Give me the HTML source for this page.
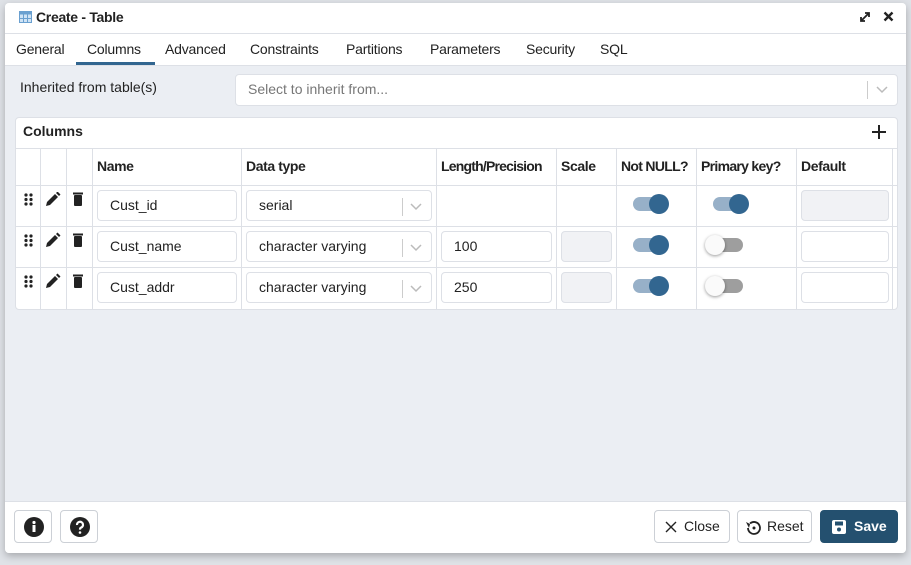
<!DOCTYPE html>
<html><head><style>
*{box-sizing:border-box;margin:0;padding:0}
body{width:911px;height:565px;background:#dfe2e7;font-family:"Liberation Sans",sans-serif;font-size:14px;color:#222;position:relative;overflow:hidden}
.a{position:absolute}
.dlg{left:5px;top:3px;width:901px;height:550px;background:#ebeef3;border-radius:4px;box-shadow:0 3px 8px rgba(0,0,0,.25);overflow:hidden}
.inp{position:absolute;background:#fff;border:1px solid #dde0e6;border-radius:4px;font-size:14px;padding-left:12px;line-height:29px;color:#222}
.dis{background:#f1f2f5}
.vl{position:absolute;top:0;width:1px;background:#dde0e6}
.hl{position:absolute;left:0;height:1px;background:#dde0e6}
.th{position:absolute;top:158px;font-weight:bold;font-size:14px;letter-spacing:-0.4px}
.tg{position:absolute;width:36px;height:16px}
.tg .tr{position:absolute;left:0;top:3px;width:34px;height:14px;border-radius:7px}
.tg .kn{position:absolute;top:0;width:20px;height:20px;border-radius:50%}
.on .tr{background:#97b0c8}.on .kn{left:16px;background:#326690}
.off .tr{background:#9e9e9e;left:4px}.off .kn{left:0;background:#fafafa;box-shadow:0 1px 3px rgba(0,0,0,.4)}
.btn{position:absolute;top:510px;height:33px;border:1px solid #ccd0d6;border-radius:4px;background:#fff;font-size:14px;line-height:31px}
</style></head><body>
<div class="a dlg"></div>
<div class="a" style="left:5px;top:3px;width:901px;height:62px;background:#fff;border-radius:4px 4px 0 0"></div>
<div class="a" style="left:5px;top:33px;width:901px;height:1px;background:#dde0e6"></div>
<div class="a" style="left:5px;top:65px;width:901px;height:1px;background:#dde0e6"></div>
<svg class="a" style="left:19px;top:11px" width="13" height="12"><rect x="0.5" y="0.5" width="12" height="11" fill="#cfe3f5" stroke="#6aa0d0"/><rect x="0.5" y="0.5" width="12" height="3" fill="#6aa0d0"/><line x1="4.5" y1="0" x2="4.5" y2="12" stroke="#6aa0d0"/><line x1="8.5" y1="0" x2="8.5" y2="12" stroke="#6aa0d0"/><line x1="0" y1="7.5" x2="13" y2="7.5" stroke="#6aa0d0"/></svg>
<div class="a" style="left:36px;top:9px;font-weight:bold;font-size:14px;letter-spacing:-0.3px">Create - Table</div>
<svg class="a" style="left:859px;top:11px" width="12" height="12"><path d="M2 10L10 2M6 2h4v4M2 6v4h4" stroke="#222" stroke-width="1.8" fill="none"/></svg>
<svg class="a" style="left:883px;top:11px" width="11" height="11"><path d="M1.5 1.5L9.5 9.5M9.5 1.5L1.5 9.5" stroke="#222" stroke-width="2.4"/></svg>
<div class="a" style="top:41px;left:16px;font-size:14px;letter-spacing:-0.2px">
<span class="a" style="left:0">General</span><span class="a" style="left:71px">Columns</span><span class="a" style="left:149px">Advanced</span><span class="a" style="left:234px">Constraints</span><span class="a" style="left:330px">Partitions</span><span class="a" style="left:414px">Parameters</span><span class="a" style="left:510px">Security</span><span class="a" style="left:584px">SQL</span></div>
<div class="a" style="left:76px;top:62px;width:79px;height:3px;background:#326690"></div>
<div class="a" style="left:20px;top:79px">Inherited from table(s)</div>
<div class="inp" style="left:235px;top:74px;width:663px;height:32px;color:#777">Select to inherit from...</div>
<div class="a" style="left:867px;top:81px;width:1px;height:18px;background:#ccc"></div>
<svg class="a" style="left:876px;top:86px" width="12" height="8"><path d="M1 1l5 5 5-5" stroke="#bbb" stroke-width="1.5" fill="none"/></svg>
<div class="a" style="left:15px;top:117px;width:883px;height:193px;background:#fff;border:1px solid #dde0e6;border-radius:4px;overflow:hidden">
 <div class="hl" style="top:30px;width:883px"></div>
 <div class="hl" style="top:67px;width:883px"></div>
 <div class="hl" style="top:108px;width:883px"></div>
 <div class="hl" style="top:149px;width:883px"></div>
 <div class="vl" style="left:24px;top:30px;height:163px"></div>
 <div class="vl" style="left:50px;top:30px;height:163px"></div>
 <div class="vl" style="left:76px;top:30px;height:163px"></div>
 <div class="vl" style="left:225px;top:30px;height:163px"></div>
 <div class="vl" style="left:420px;top:30px;height:163px"></div>
 <div class="vl" style="left:540px;top:30px;height:163px"></div>
 <div class="vl" style="left:600px;top:30px;height:163px"></div>
 <div class="vl" style="left:680px;top:30px;height:163px"></div>
 <div class="vl" style="left:780px;top:30px;height:163px"></div>
 <div class="vl" style="left:876px;top:30px;height:163px"></div>
</div>
<div class="a" style="left:23px;top:123px;font-weight:bold">Columns</div>
<svg class="a" style="left:872px;top:125px" width="14" height="14"><path d="M7 0v14M0 7h14" stroke="#222" stroke-width="2"/></svg>
<div class="th" style="left:97px">Name</div>
<div class="th" style="left:246px">Data type</div>
<div class="th" style="left:441px;letter-spacing:-0.8px">Length/Precision</div>
<div class="th" style="left:561px">Scale</div>
<div class="th" style="left:621px;letter-spacing:-0.7px">Not NULL?</div>
<div class="th" style="left:701px;letter-spacing:-0.7px">Primary key?</div>
<div class="th" style="left:801px">Default</div>
<svg class="a" style="left:20px;top:192px" width="70" height="100">
 <g fill="#222">
  <g id="r"><circle cx="6" cy="3" r="1.6"/><circle cx="11" cy="3" r="1.6"/><circle cx="6" cy="7.5" r="1.6"/><circle cx="11" cy="7.5" r="1.6"/><circle cx="6" cy="12" r="1.6"/><circle cx="11" cy="12" r="1.6"/>
  <path d="M26 14l1-4 8-8 3 3-8 8z"/><path d="M36 1l1.5-1.5 3 3L39 4z"/>
  <rect x="53" y="0.5" width="10" height="2" /><rect x="54" y="3" width="8" height="11" rx="1"/></g>
  <use href="#r" y="41"/><use href="#r" y="82"/>
 </g>
</svg>
<div class="inp" style="left:97px;top:190px;width:140px;height:31px">Cust_id</div>
<div class="inp" style="left:246px;top:190px;width:186px;height:31px">serial</div>
<div class="inp dis" style="left:801px;top:190px;width:88px;height:31px"></div>
<div class="inp" style="left:97px;top:231px;width:140px;height:31px">Cust_name</div>
<div class="inp" style="left:246px;top:231px;width:186px;height:31px">character varying</div>
<div class="inp" style="left:441px;top:231px;width:111px;height:31px">100</div>
<div class="inp dis" style="left:561px;top:231px;width:51px;height:31px"></div>
<div class="inp" style="left:801px;top:231px;width:88px;height:31px"></div>
<div class="inp" style="left:97px;top:272px;width:140px;height:31px">Cust_addr</div>
<div class="inp" style="left:246px;top:272px;width:186px;height:31px">character varying</div>
<div class="inp" style="left:441px;top:272px;width:111px;height:31px">250</div>
<div class="inp dis" style="left:561px;top:272px;width:51px;height:31px"></div>
<div class="inp" style="left:801px;top:272px;width:88px;height:31px"></div>
<svg class="a" style="left:400px;top:194px" width="28" height="110"><g stroke="#ccc"><line x1="2.5" y1="4" x2="2.5" y2="22"/><line x1="2.5" y1="45" x2="2.5" y2="63"/><line x1="2.5" y1="86" x2="2.5" y2="104"/></g><g stroke="#bbb" stroke-width="1.5" fill="none"><path d="M11 10l5 5 5-5"/><path d="M11 51l5 5 5-5"/><path d="M11 92l5 5 5-5"/></g></svg>
<div class="tg on" style="left:633px;top:194px"><div class="tr"></div><div class="kn"></div></div>
<div class="tg on" style="left:713px;top:194px"><div class="tr"></div><div class="kn"></div></div>
<div class="tg on" style="left:633px;top:235px"><div class="tr"></div><div class="kn"></div></div>
<div class="tg off" style="left:705px;top:235px"><div class="tr"></div><div class="kn"></div></div>
<div class="tg on" style="left:633px;top:276px"><div class="tr"></div><div class="kn"></div></div>
<div class="tg off" style="left:705px;top:276px"><div class="tr"></div><div class="kn"></div></div>
<div class="a" style="left:5px;top:501px;width:901px;height:52px;background:#fff;border-top:1px solid #dde0e6;border-radius:0 0 4px 4px"></div>
<div class="btn" style="left:14px;width:38px"><svg style="position:absolute;left:9px;top:6px" width="20" height="20"><circle cx="10" cy="10" r="10" fill="#222"/><rect x="8.5" y="8" width="3" height="7" fill="#fff"/><circle cx="10" cy="5.5" r="1.6" fill="#fff"/></svg></div>
<div class="btn" style="left:60px;width:38px"><svg style="position:absolute;left:9px;top:6px" width="20" height="20"><circle cx="10" cy="10" r="10" fill="#222"/><path d="M7 8a3 3 0 1 1 4 2.6c-1 .5-1 1-1 2" stroke="#fff" stroke-width="2.2" fill="none"/><circle cx="10" cy="15.5" r="1.3" fill="#fff"/></svg></div>
<div class="btn" style="left:654px;width:76px;padding-left:29px">Close<svg style="position:absolute;left:10px;top:10px" width="12" height="12"><path d="M1 1l10 10M11 1L1 11" stroke="#222" stroke-width="1.4"/></svg></div>
<div class="btn" style="left:737px;width:75px;padding-left:29px">Reset<svg style="position:absolute;left:6px;top:8px" width="18" height="18"><path d="M4 9a6 6 0 1 0 2-4.5" stroke="#222" stroke-width="1.8" fill="none"/><path d="M2 3l4 2-1 4z" fill="#222"/><circle cx="10" cy="9" r="1.5" fill="#222"/></svg></div>
<div class="btn" style="left:820px;width:78px;background:#24506f;border-color:#24506f;color:#fff;font-weight:bold;padding-left:33px">Save<svg style="position:absolute;left:11px;top:9px" width="14" height="14"><rect x="0" y="0" width="14" height="14" rx="2" fill="#fff"/><rect x="3" y="1.5" width="8" height="4" fill="#24506f"/><circle cx="7" cy="9.5" r="2" fill="#24506f"/></svg></div>
</body></html>
